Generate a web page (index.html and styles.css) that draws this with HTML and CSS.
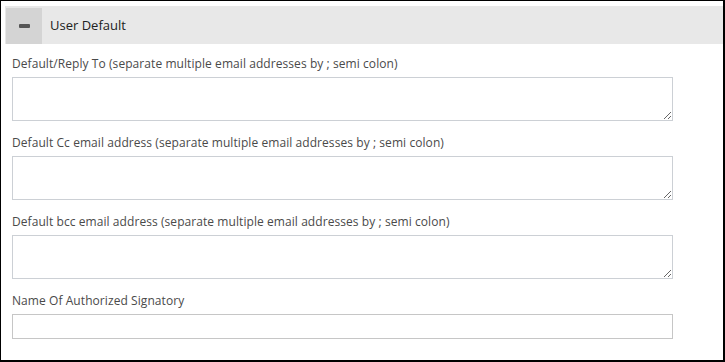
FILE: index.html
```html
<!DOCTYPE html>
<html lang="en">
<head>
  <meta charset="UTF-8" />
  <meta name="viewport" content="width=device-width, initial-scale=1.0" />
  <title>User Default</title>
  <link rel="stylesheet" href="styles.css">
</head>
<body>
  <div class="frame">
    <!-- Collapsible section header -->
    <div class="section-head">
      <span class="toggle-btn"><span class="minus"></span></span>
      <span class="section-title">User Default</span>
    </div>

    <div class="section-body">
      <div class="field">
        <label for="replyTo">Default/Reply To (separate multiple email addresses by ; semi colon)</label>
        <textarea id="replyTo" class="field-area"></textarea>
      </div>
      <div class="field">
        <label for="ccAddr">Default Cc email address (separate multiple email addresses by ; semi colon)</label>
        <textarea id="ccAddr" class="field-area"></textarea>
      </div>
      <div class="field">
        <label for="bccAddr">Default bcc email address (separate multiple email addresses by ; semi colon)</label>
        <textarea id="bccAddr" class="field-area"></textarea>
      </div>
      <div class="field">
        <label for="signatory">Name Of Authorized Signatory</label>
        <input id="signatory" type="text" class="field-input" />
      </div>
    </div>
  </div>
</body>
</html>
```

FILE: styles.css
```css
/* Global */
body {
  margin: 0;
  padding: 0;
  background: #fff;
  font-family: "Open Sans", Arial, sans-serif;
}
.frame {
  width: 725px;
  height: 362px;
  box-sizing: border-box;
  border: solid #000;
  border-width: 1px 2px 2px 1px;
  overflow: hidden;
}

/* Section header */
.section-head {
  margin: 5px 0 0 4px;
  height: 38px;
  background-color: #e8e8e8;
  display: flex;
  align-items: center;
}
.toggle-btn {
  width: 36px;
  height: 36px;
  margin: 1px 0 0 1px;
  background-color: #d4d4d4;
  display: flex;
  align-items: center;
  justify-content: center;
}
.minus {
  width: 11px;
  height: 4px;
  border-radius: 1px;
  background-color: #555;
}
.section-title {
  margin-left: 8px;
  font-size: 13px;
  color: #222;
}

/* Fields */
.section-body {
  padding: 11px 0 0 11px;
}
.field {
  margin-bottom: 13px;
}
.field label {
  display: block;
  font-size: 12px;
  line-height: 18px;
  letter-spacing: 0.07px;
  color: #4a4a4a;
  margin-bottom: 4px;
}
.field-area,
.field-input {
  display: block;
  width: 661px;
  box-sizing: border-box;
  margin: 0;
  border: 1px solid #ccd0d5;
  background: #fff;
  font-family: inherit;
}
.field-area {
  height: 44px;
}
.field-input {
  height: 25px;
  border-color: #c6c6c6;
}
```
